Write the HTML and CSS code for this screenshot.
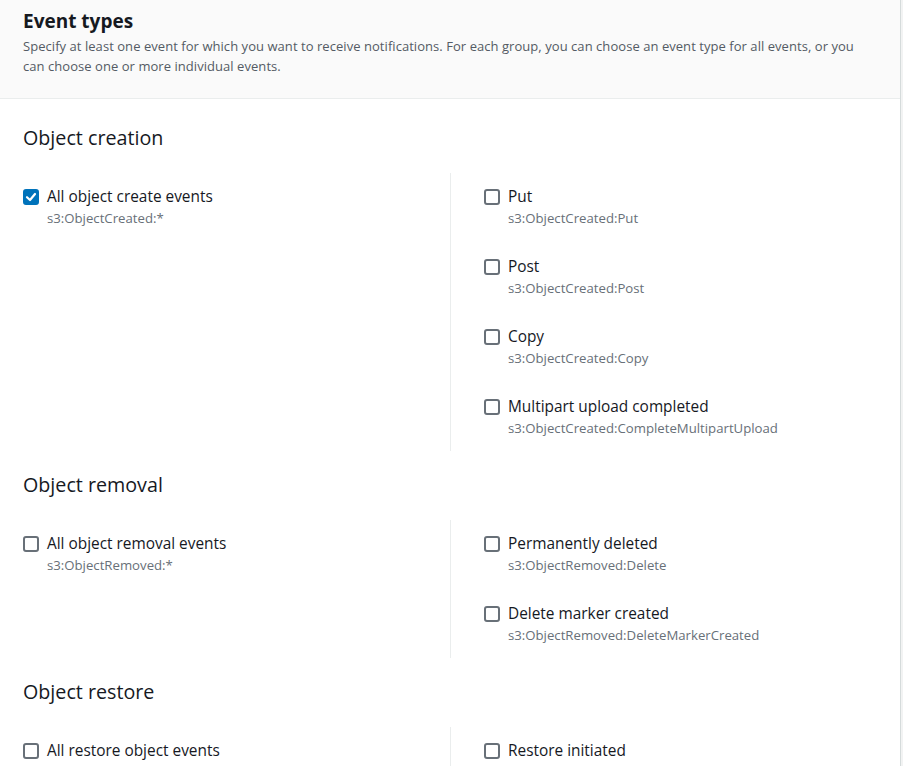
FILE: index.html
```html
<!DOCTYPE html>
<html lang="en">
<head>
<meta charset="utf-8">
<title>Event types</title>
<link rel="stylesheet" href="styles.css">
</head>
<body>
<div class="panel">
  <div class="panel-header">
    <h2 class="title">Event types</h2>
    <p class="desc">Specify at least one event for which you want to receive notifications. For each group, you can choose an event type for all events, or you can choose one or more individual events.</p>
  </div>
  <div class="panel-body">
    <section class="group">
      <h3 class="group-title">Object creation</h3>
      <div class="cols">
        <div class="col col-left">
          <label class="item">
            <span class="box checked"><svg viewBox="0 0 16 16" width="16" height="16"><path d="M4 8.2 L7 11 L12 5" fill="none" stroke="#fff" stroke-width="2.2" stroke-linecap="round" stroke-linejoin="round"/></svg></span>
            <span class="text"><span class="name">All object create events</span><span class="code">s3:ObjectCreated:*</span></span>
          </label>
        </div>
        <div class="col col-right">
          <label class="item"><span class="box"></span><span class="text"><span class="name">Put</span><span class="code">s3:ObjectCreated:Put</span></span></label>
          <label class="item"><span class="box"></span><span class="text"><span class="name">Post</span><span class="code">s3:ObjectCreated:Post</span></span></label>
          <label class="item"><span class="box"></span><span class="text"><span class="name">Copy</span><span class="code">s3:ObjectCreated:Copy</span></span></label>
          <label class="item"><span class="box"></span><span class="text"><span class="name">Multipart upload completed</span><span class="code">s3:ObjectCreated:CompleteMultipartUpload</span></span></label>
        </div>
      </div>
    </section>
    <section class="group">
      <h3 class="group-title">Object removal</h3>
      <div class="cols">
        <div class="col col-left">
          <label class="item"><span class="box"></span><span class="text"><span class="name">All object removal events</span><span class="code">s3:ObjectRemoved:*</span></span></label>
        </div>
        <div class="col col-right">
          <label class="item"><span class="box"></span><span class="text"><span class="name">Permanently deleted</span><span class="code">s3:ObjectRemoved:Delete</span></span></label>
          <label class="item"><span class="box"></span><span class="text"><span class="name">Delete marker created</span><span class="code">s3:ObjectRemoved:DeleteMarkerCreated</span></span></label>
        </div>
      </div>
    </section>
    <section class="group">
      <h3 class="group-title">Object restore</h3>
      <div class="cols">
        <div class="col col-left">
          <label class="item"><span class="box"></span><span class="text"><span class="name">All restore object events</span><span class="code">s3:ObjectRestore:*</span></span></label>
        </div>
        <div class="col col-right">
          <label class="item"><span class="box"></span><span class="text"><span class="name">Restore initiated</span><span class="code">s3:ObjectRestore:Post</span></span></label>
          <label class="item"><span class="box"></span><span class="text"><span class="name">Restore completed</span><span class="code">s3:ObjectRestore:Completed</span></span></label>
        </div>
      </div>
    </section>
  </div>
</div>
</body>
</html>
```
FILE: styles.css
```css
* { box-sizing: border-box; }
html, body { margin: 0; padding: 0; }
body {
  background: #f2f3f3;
  font-family: "Open Sans", "Noto Sans", Arial, sans-serif;
  color: #16191f;
  overflow: hidden;
  height: 766px;
}
.panel {
  width: 901px;
  background: #ffffff;
  border-right: 1px solid #d5dbdb;
  min-height: 766px;
}
.panel-header {
  background: #fafafa;
  border-bottom: 1px solid #eaeded;
  padding: 9px 23px 20px 23px;
  height: 99px;
}
.title {
  margin: 0;
  font-size: 19px;
  line-height: 25px;
  font-weight: 700;
  color: #16191f;
}
.desc {
  margin: 2px 0 0 0;
  font-size: 13px;
  line-height: 20px;
  letter-spacing: 0.05px;
  color: #545b64;
  max-width: 856px;
}
.panel-body {
  padding: 27px 23px 0 23px;
}
.group { margin-bottom: 22px; }
.group-title {
  margin: 0 0 23px 0;
  font-size: 19.7px;
  line-height: 24px;
  font-weight: 400;
  color: #16191f;
}
.cols {
  display: grid;
  grid-template-columns: 427px 1fr;
}
.col {
  display: flex;
  flex-direction: column;
  gap: 28px;
  padding: 13px 0 13px 0;
}
.col-right {
  border-left: 1px solid #eaeded;
  padding-left: 33px;
}
.item {
  display: flex;
  align-items: flex-start;
  gap: 8px;
}
.box {
  flex: none;
  width: 16px;
  height: 16px;
  margin-top: 3px;
  border: 2px solid #687078;
  border-radius: 3px;
  background: #fff;
  display: flex;
  align-items: center;
  justify-content: center;
}
.box.checked {
  background: #0073bb;
  border-color: #0073bb;
}
.box.checked svg { display: block; flex: none; }
.text { display: flex; flex-direction: column; }
.name {
  font-size: 15.4px;
  line-height: 22px;
  color: #16191f;
}
.code {
  font-size: 13.2px;
  line-height: 20px;
  color: #687078;
}
```
